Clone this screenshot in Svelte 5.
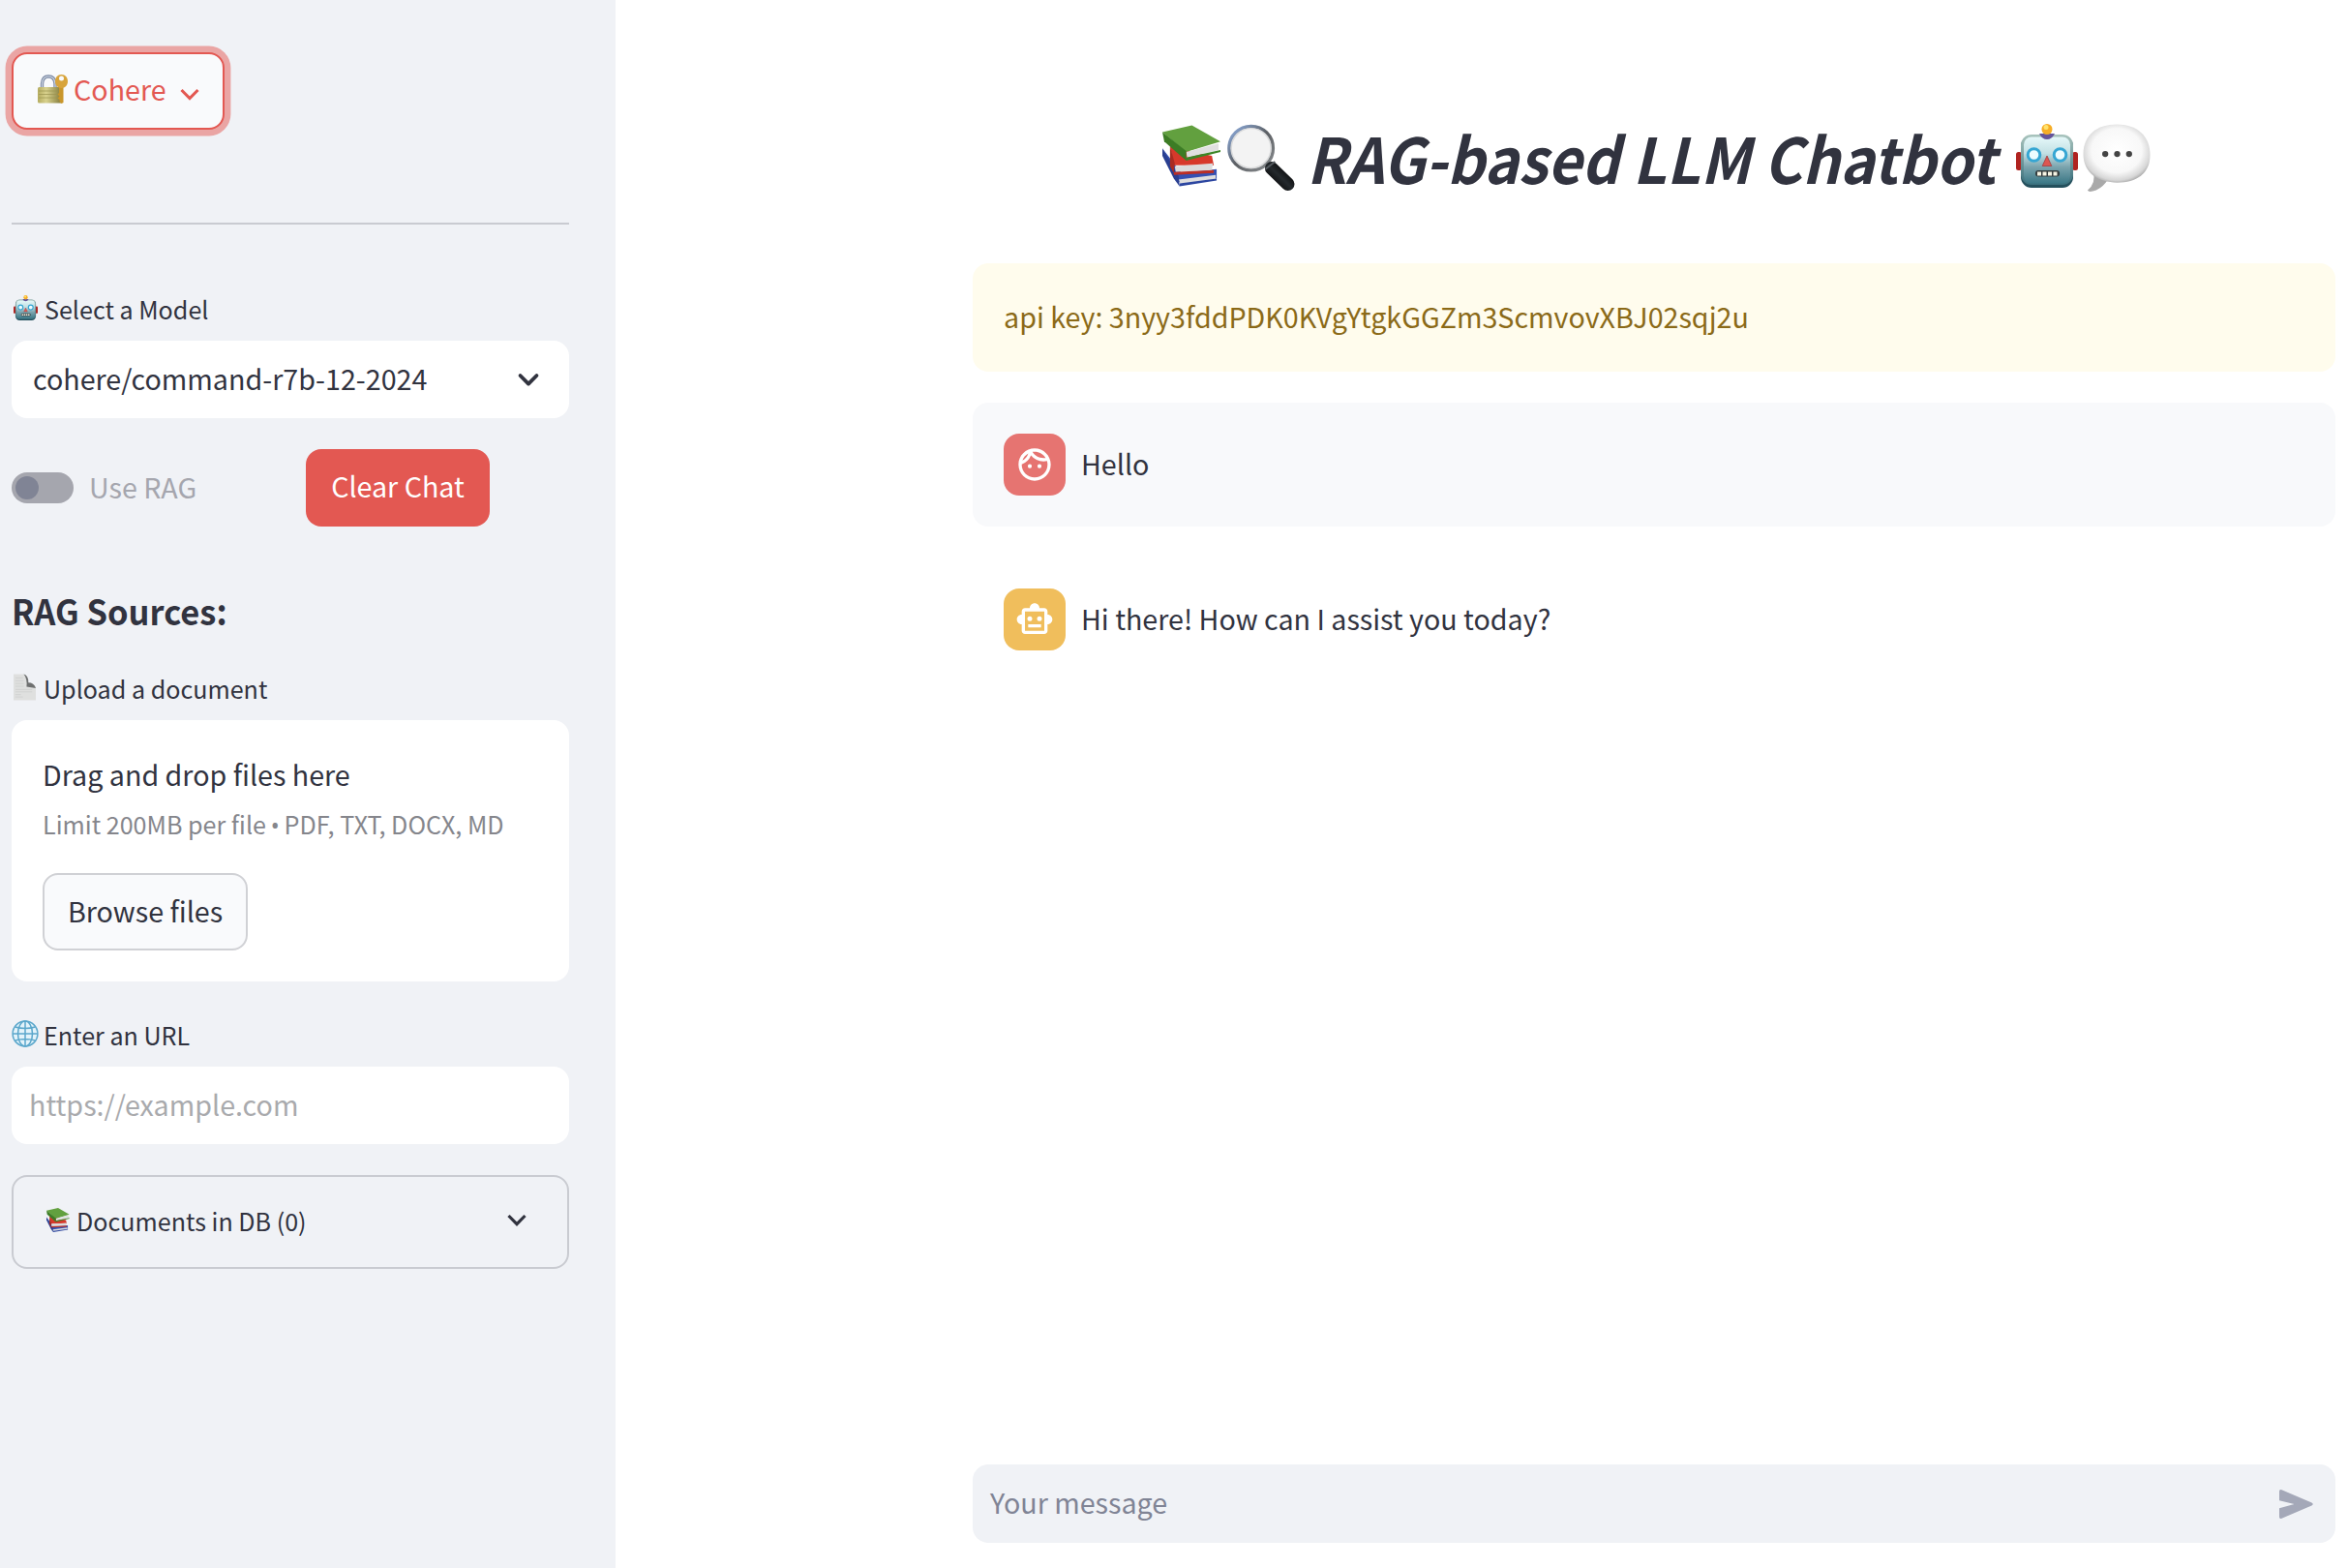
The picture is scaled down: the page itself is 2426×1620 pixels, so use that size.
<script>
  const messages = [
    { role: 'user', text: 'Hello' },
    { role: 'assistant', text: 'Hi there! How can I assist you today?' }
  ];
</script>

{#snippet chevron(kind)}
  <svg class="chev {kind}" viewBox="0 0 20 13"><path d="M1.500 2 L10 10.600 L18.500 2" /></svg>
{/snippet}

{#snippet books(kind)}
  <svg class={kind} viewBox="0 0 62 64">
    <path d="M0 24 L18 60 L57 56 L57 46 L20 50 Z" fill="#3451b3" />
    <path d="M17 57 L56 52 L56 57 L19 61 Z" fill="#dedede" />
    <path d="M0 24 L17 53 L18 64 L12 56 L0 32 Z" fill="#293f91" />
    <path d="M18 61 L57 56 L57 58 L18 64 Z" fill="#2c46a0" />
    <path d="M8 22 L52 32 L54 42 L12 42 Z" fill="#d7392b" />
    <path d="M13 43 L53 40 L52 47 L14 49 Z" fill="#dcdcdc" />
    <path d="M8 22 L13 40 L12 50 L8 43 Z" fill="#a92b22" />
    <path d="M12 49 L54 47 L54 50 L12 52 Z" fill="#bb2f25" />
    <path d="M0 7 L31 0 L61 17 L25 28 Z" fill="#62a03f" />
    <path d="M25 28 L59 19 L59 26 L26 34 Z" fill="#e0e0e0" />
    <path d="M0 7 L25 27 L25 37 L2 17 Z" fill="#3c7c25" />
    <path d="M24 34 L61 26 L61 28 L25 37 Z" fill="#3c8526" />
  </svg>
{/snippet}

{#snippet robot(kind)}
  <svg class={kind} viewBox="0 0 64 66">
    <defs>
      <linearGradient id="face-{kind}" x1="0" y1="0" x2="0" y2="1">
        <stop offset="0" stop-color="#e5f8f9" />
        <stop offset=".35" stop-color="#c3e0e4" />
        <stop offset=".65" stop-color="#7aa3ad" />
        <stop offset="1" stop-color="#3b7886" />
      </linearGradient>
      <linearGradient id="shell-{kind}" x1="0" y1="0" x2="0" y2="1">
        <stop offset="0" stop-color="#a9c4bd" />
        <stop offset="1" stop-color="#3a6f7c" />
      </linearGradient>
    </defs>
    <rect x="0" y="29" width="6" height="19" rx="2.5" fill="#b02320" />
    <rect x="58" y="29" width="6" height="19" rx="2.5" fill="#b02320" />
    <rect x="5" y="12" width="54" height="54" rx="11" fill="#24505d" />
    <rect x="5" y="11" width="54" height="52" rx="11" fill="url(#shell-{kind})" />
    <rect x="8" y="13.500" width="48" height="48" rx="8" fill="url(#face-{kind})" />
    <path d="M24 10 H40 Q37 16 32 16 Q27 16 24 10Z" fill="#66549a" />
    <circle cx="32" cy="5.500" r="5.500" fill="#f6ad26" />
    <circle cx="31" cy="3.500" r="2.500" fill="#ffe26b" />
    <g fill="#eefcff" stroke="#36a6d3" stroke-width="3">
      <circle cx="18.500" cy="32" r="6.300" /><circle cx="45.500" cy="32" r="6.300" />
    </g>
    <path d="M32 33 L36.800 43.500 H27.200Z" fill="#dc5751" stroke="#9e3c40" stroke-width=".8" />
    <rect x="20" y="48" width="25" height="6.500" rx="3" fill="#353d3e" />
    <path d="M22 49.500h4v4h-4zM27.500 49.500h4v4h-4zM33 49.500h4v4h-4zM38.500 49.500h4v4h-4z" fill="#f7f5e4" />
  </svg>
{/snippet}

<div class="app">
  <aside>
    <button class="provider">
      <svg class="lock" viewBox="0 0 31 30">
        <defs>
          <linearGradient id="brass"><stop offset="0" stop-color="#b5ac60" /><stop offset=".35" stop-color="#d8d18d" /><stop offset="1" stop-color="#81793a" /></linearGradient>
        </defs>
        <path d="M4.500 14 V9.500 Q5 2 11 2 Q17.500 2 18 9.500 V14" fill="none" stroke="#7e8ba5" stroke-width="3.400" />
        <path d="M4.500 14 V9.500 Q5 2 11 2 Q17.500 2 18 9.500 V14" fill="none" stroke="#ccd5e3" stroke-width="1.200" />
        <rect x="0" y="13" width="25" height="16.500" rx="1.500" fill="url(#brass)" />
        <path d="M1 17H20M1 20.500H20M1 24H20" stroke="#9c9551" stroke-width=".7" />
        <path d="M22 12 h4.500 v17 l-2 1 -2-2 v-2 l-2-1.500 2-2 -2-2 1.500-1.500z" fill="#c9962b" />
        <path fill-rule="evenodd" d="M24.500 0C28.500 0 31 3 31 7s-2.500 7-6.500 7S18 11 18 7s2.500-7 6.500-7Zm0 1.500a2.500 2.500 0 1 0 0 5 2.500 2.500 0 0 0 0-5Z" fill="#d8a43b" />
      </svg>
      <span>Cohere</span>
      {@render chevron('red')}
    </button>

    <hr />

    <div class="label model-label">{@render robot('robot-sm')}<span>Select a Model</span></div>
    <div class="select"><span>cohere/command-r7b-12-2024</span>{@render chevron('bold')}</div>

    <div class="controls">
      <div class="toggle"><i></i></div>
      <span class="use">Use RAG</span>
      <button class="clear"><span>Clear Chat</span></button>
    </div>

    <h3>RAG Sources:</h3>

    <div class="label upload-label">
      <svg class="page" viewBox="0 0 24 28">
        <path d="M0 0 H12 Q15 2 15 10 Q22 9 24 14 V28 H0Z" fill="#dfe0df" />
        <path d="M11 0 Q16 1 16 9 Q22 9 24 15 L14 13.500 Q15 5 11 0Z" fill="#6e7070" />
        <path d="M2 4h8M2 7h9M2 10h9M2 13h9M2 16.500h18M2 19h18M2 22h6M2 24.500h8" stroke="#d0d2d1" stroke-width="1" />
      </svg>
      <span>Upload a document</span>
    </div>
    <div class="dropzone">
      <p class="drag">Drag and drop files here</p>
      <p class="limit">Limit 200MB per file <b>•</b> PDF, TXT, DOCX, MD</p>
      <button class="browse"><span>Browse files</span></button>
    </div>

    <div class="label url-label">
      <svg class="globe" viewBox="0 0 28 28">
        <g fill="none" stroke="#5ba7cb" stroke-width="1.500">
          <circle cx="14" cy="14" r="12.900" fill="#e3f3fa" />
          <ellipse cx="14" cy="14" rx="7.500" ry="12.900" />
          <path d="M14 1V27M1 14H27M3.500 7Q14 10 24.500 7M3.500 21Q14 18 24.500 21" />
        </g>
      </svg>
      <span>Enter an URL</span>
    </div>
    <div class="field"><span>https://example.com</span></div>

    <div class="expander">{@render books('books-sm')}<span>Documents in DB (0)</span>{@render chevron('thin')}</div>
  </aside>

  <main>
    <h1>
      {@render books('books')}
      <svg class="lens" viewBox="0 0 71 71">
        <defs>
          <linearGradient id="rim" x1="0" y1="0" x2="1" y2="1"><stop offset="0" stop-color="#8fb0e4" /><stop offset=".5" stop-color="#5c5f63" /><stop offset="1" stop-color="#8b8f92" /></linearGradient>
          <linearGradient id="grip" x1="0" y1="1" x2="1" y2="0"><stop offset="0" stop-color="#080808" /><stop offset=".5" stop-color="#24292d" /><stop offset="1" stop-color="#050505" /></linearGradient>
        </defs>
        <path d="M40 41 L45 46" stroke="#767a7d" stroke-width="7" />
        <circle cx="25" cy="26" r="23" fill="#f3f3f3" stroke="url(#rim)" stroke-width="3.600" />
        <circle cx="25" cy="26" r="20.800" fill="none" stroke="#d8d9da" stroke-width="1.500" />
        <path d="M46.500 47 L63.500 63.500" stroke="url(#grip)" stroke-width="14" stroke-linecap="round" />
        <path d="M40 48 L50 40" stroke="#555b60" stroke-width="2" />
      </svg>
      <span class="title">RAG-based LLM Chatbot</span>
      {@render robot('robot')}
      <svg class="bubble" viewBox="0 0 71 71">
        <defs>
          <radialGradient id="gloss" cx=".5" cy=".45" r=".58"><stop offset="0" stop-color="#fff" /><stop offset=".65" stop-color="#f8f8f8" /><stop offset=".88" stop-color="#d6d6d6" /><stop offset="1" stop-color="#a0a0a0" /></radialGradient>
        </defs>
        <path d="M11 50 Q14 62 5 69 Q6 72 14 69 Q22 65 26 58Z" fill="#a9a9a9" />
        <path d="M35.500 0C57 0 70.500 12 70.500 32S56 61 36 61 0.500 51 0.500 31 15 0 35.500 0Z" fill="url(#gloss)" />
        <g fill="#444"><circle cx="23.500" cy="31" r="3.200" /><circle cx="36" cy="31" r="3.200" /><circle cx="48.500" cy="31" r="3.200" /></g>
      </svg>
    </h1>

    <div class="alert"><span>api key: 3nyy3fddPDK0KVgYtgkGGZm3ScmvovXBJ02sqj2u</span></div>

    {#each messages as m}
      <div class="message {m.role}">
        <div class="avatar">
          {#if m.role === 'user'}
            <svg viewBox="0 0 24 24"><path d="M10.250 13a1.250 1.250 0 1 1-2.500 0 1.250 1.250 0 0 1 2.500 0ZM15 11.750a1.250 1.250 0 1 0 0 2.500 1.250 1.250 0 0 0 0-2.500ZM22 12c0 5.520-4.480 10-10 10S2 17.520 2 12 6.480 2 12 2s10 4.480 10 10ZM10.660 4.120C12.060 6.440 14.600 8 17.500 8c.46 0 .91-.05 1.340-.12C17.440 5.560 14.900 4 12 4c-.46 0-.91.050-1.340.120ZM4.420 9.470a8.050 8.050 0 0 0 3.660-4.440 8.050 8.050 0 0 0-3.660 4.440ZM20 12c0-.78-.12-1.530-.33-2.240-.7.150-1.420.240-2.170.240a10 10 0 0 1-7.760-3.690A10.020 10.020 0 0 1 4 11.860c.010.040 0 .090 0 .140 0 4.410 3.590 8 8 8s8-3.590 8-8Z" /></svg>
          {:else}
            <svg viewBox="0 0 24 24"><path d="M20 9V7c0-1.100-.9-2-2-2h-3c0-1.660-1.340-3-3-3S9 3.340 9 5H6c-1.100 0-2 .9-2 2v2c-1.660 0-3 1.340-3 3s1.340 3 3 3v4c0 1.100.9 2 2 2h12c1.100 0 2-.9 2-2v-4c1.660 0 3-1.340 3-3s-1.340-3-3-3Zm-2 10H6V7h12v12ZM9 13a1.500 1.500 0 1 1 0-3 1.500 1.500 0 0 1 0 3Zm7.500-1.500a1.500 1.500 0 1 1-3 0 1.500 1.500 0 0 1 3 0ZM8 15h8v2H8Z" /></svg>
          {/if}
        </div>
        <span>{m.text}</span>
      </div>
    {/each}

    <div class="composer">
      <span>Your message</span>
      <svg viewBox="0 0 35 30"><path d="M0 1.800 Q0 -.5 2.500 .3 L33.500 13.500 Q36 15 33.500 16.500 L2.500 29.700 Q0 30.500 0 28.200 V19.200 L15.500 15 L0 11.300Z" /></svg>
    </div>
  </main>
</div>

<style>
  :global(body) { margin: 0; background: #fff; }
  .app {
    display: flex; width: 2426px; height: 1620px; overflow: hidden;
    font-family: "Noto Sans CJK SC", "Noto Sans", sans-serif; font-size: 28.66px; line-height: 50px;
    color: #31333f; white-space: nowrap;
  }
  .app :global(*) { box-sizing: border-box; }
  svg { display: block; flex: none; overflow: visible; }
  span { margin-bottom: 3px; }
  button { font: inherit; color: inherit; margin: 0; display: flex; align-items: center; height: 80px; border-radius: 16px; }
  aside {
    width: 636px; flex: none; background: #f0f2f6; padding: 54px 48px 0 12px;
    display: flex; flex-direction: column; align-items: stretch;
  }
  .provider {
    align-self: flex-start; width: 220px; border: 2px solid #e35852; background: #f9fafc; color: #e35852;
    padding: 0 0 0 25px; box-shadow: 0 0 0 6.4px rgba(227, 88, 82, .5);
  }
  .lock { width: 31px; height: 30px; margin-top: -4px; }
  .provider span { width: 95px; margin: 0 0 4px 6px; }
  .chev { width: 20px; height: 13px; fill: none; stroke: #31333f; stroke-width: 3.200; }
  .bold { stroke-width: 3.800; stroke-linecap: round; stroke-linejoin: round; }
  .red { stroke: #e35852; margin: 6px 0 0 15px; stroke-width: 3; }
  hr { width: 100%; height: 2px; border: 0; background: #c9cbd1; margin: 96px 0 68px; flex: none; }
  .label { display: flex; align-items: center; height: 40px; font-size: 25.100px; line-height: 40px; }
  .robot-sm { width: 25px; height: 26px; margin: -4px 7px 0 2px; }
  .model-label { margin-bottom: 12px; }
  .select { height: 80px; background: #fff; border-radius: 16px; display: flex; align-items: center; justify-content: space-between; padding: 0 32px 0 22px; }
  .controls { display: flex; align-items: center; height: 80px; margin-top: 32px; }
  .toggle { width: 64px; height: 32px; border-radius: 16px; background: #a5a6ae; padding: 4px; flex: none; }
  .toggle i { display: block; width: 24px; height: 24px; border-radius: 50%; background: #808495; }
  .use { width: 224px; margin-left: 16px; color: #a5a6ae; }
  .clear { width: 190px; border: 0; background: #e35852; color: #fff; justify-content: center; padding: 0; }
  .clear span { margin-bottom: 4px; }
  h3 { margin: 61px 0 0; height: 50px; font-size: 36px; line-height: 50px; font-weight: 600; transform: scaleX(.958); transform-origin: left; }
  .upload-label { margin: 37px 0 12px; }
  .page { width: 23px; height: 28px; margin: -4px 8px 0 2px; }
  .dropzone { height: 270px; flex: none; background: #fff; border-radius: 16px; padding: 31px 32px 32px; }
  p { margin: 0; }
  .drag { height: 51px; }
  .limit { height: 49px; line-height: 50px; font-size: 25.100px; color: #85868c; }
  .limit b { font-family: "Open Sans", sans-serif; font-weight: 400; line-height: 1; margin: 0 -1px; }
  .browse { width: 212px; margin-top: 27px; border: 2px solid #d0d1d5; background: #f9fafc; justify-content: center; padding: 0; }
  .url-label { margin: 36px 0 12px; }
  .globe { width: 28px; height: 28px; margin: -4px 5px 0 0; }
  .field { height: 80px; background: #fff; border-radius: 16px; display: flex; align-items: center; padding-left: 18px; color: #a9aaad; }
  .expander { height: 97px; margin-top: 32px; border: 2px solid #c9cbd1; border-radius: 16px; display: flex; align-items: center; padding: 0 42px 0 34px; font-size: 25.100px; }
  .books-sm { width: 24px; height: 25px; margin: -4px 7px 0 0; }
  .expander .chev { margin: -5px 0 0 auto; }
  main { flex: 1; padding: 126px 13px 26px 369px; display: flex; flex-direction: column; }
  h1 { display: flex; align-items: flex-start; height: 146px; margin: 0; padding-left: 196px; font-size: 64.800px; line-height: 76px; font-weight: 600; font-style: italic; }
  .books { width: 61px; height: 64px; margin-top: 3px; }
  .lens { width: 70px; height: 71px; margin: 1px 0 0 6px; }
  .title { width: 733px; margin: -2px 0 0 12px; transform: scaleX(.935); transform-origin: left; }
  .robot { width: 64px; height: 66px; margin-top: 2px; }
  .bubble { width: 70px; height: 71px; margin: 2px 0 0 5px; }
  .alert { height: 112px; border-radius: 16px; background: #fffced; color: #8b6a18; display: flex; align-items: center; padding-left: 32px; margin-bottom: 32px; }
  .message { height: 128px; border-radius: 16px; display: flex; align-items: center; padding-left: 32px; gap: 16px; margin-bottom: 32px; }
  .message.user { background: #f8f9fb; }
  .avatar { width: 64px; height: 64px; border-radius: 16px; background: #e67471; display: flex; align-items: center; justify-content: center; }
  .assistant .avatar { background: #f0be5c; }
  .avatar svg { width: 40px; height: 40px; fill: #fff; }
  .composer { margin-top: auto; height: 81px; border-radius: 16px; background: #f0f2f6; color: #808495; display: flex; align-items: center; justify-content: space-between; padding: 0 23px 0 18px; }
  .composer svg { width: 35px; height: 30px; fill: #a4a8b8; }
</style>
